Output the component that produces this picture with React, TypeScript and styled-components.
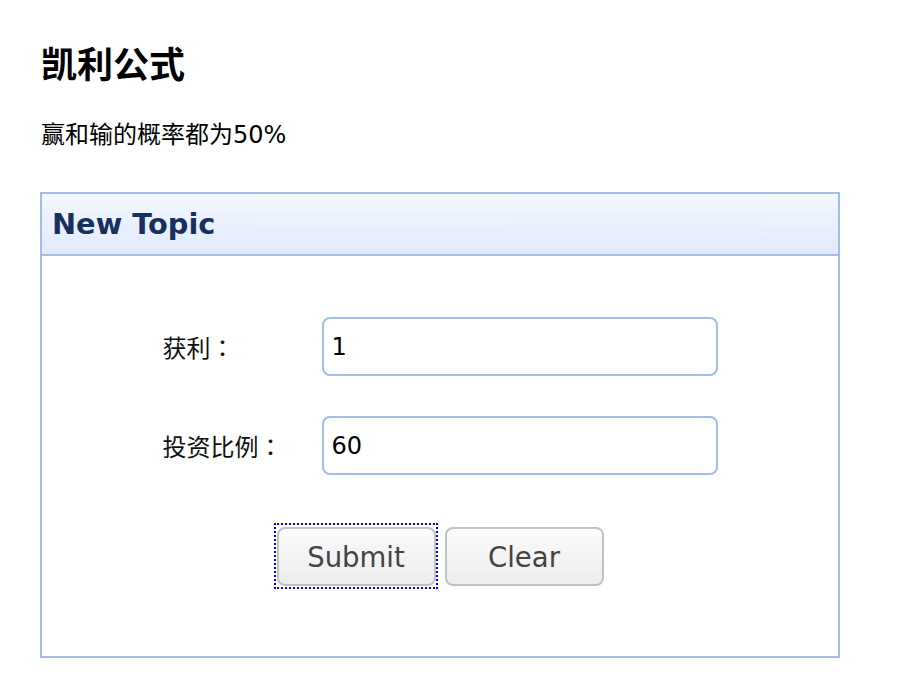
import React from "react";
import styled, { createGlobalStyle } from "styled-components";

const GlobalStyle = createGlobalStyle`
  html, body { margin: 0; padding: 0; background: #ffffff; }
  body { font-family: "DejaVu Sans", "Noto Sans CJK SC", sans-serif; color: #000; }
`;

const Page = styled.div`
  padding: 41px 0 0 41px;
  width: 800px;
`;

const Title = styled.h1`
  margin: 0;
  font-family: "Noto Sans CJK SC", sans-serif;
  font-weight: 700;
  font-size: 36px;
  line-height: 43px;
`;

const Subtitle = styled.p`
  margin: 37px 0 0 0;
  font-family: "DejaVu Sans", "Noto Sans CJK SC", sans-serif;
  font-size: 24px;
  line-height: 28px;
`;

const Panel = styled.section`
  margin: 43px 0 0 -1px;
  width: 800px;
  height: 466px;
  box-sizing: border-box;
  border: 2px solid #a2bde8;
  display: flex;
  flex-direction: column;
`;

const PanelHeader = styled.div`
  height: 62px;
  box-sizing: border-box;
  border-bottom: 2px solid #a2bde8;
  background: linear-gradient(to bottom, #f3f7fe, #e1eafb);
  display: flex;
  align-items: center;
  padding-left: 10px;
`;

const PanelTitle = styled.h2`
  margin: 0;
  font-family: "DejaVu Sans", sans-serif;
  font-weight: 700;
  font-size: 28.8px;
  color: #17305f;
`;

const PanelBody = styled.form`
  flex: 1;
  display: flex;
  flex-direction: column;
  align-items: center;
  padding-top: 61px;
`;

const FieldGrid = styled.div`
  display: grid;
  grid-template-columns: 159px 396px;
  row-gap: 40px;
  align-items: center;
`;

const Label = styled.label`
  font-family: "Noto Sans CJK SC", sans-serif;
  font-size: 24px;
  line-height: 30px;
  color: #111;
`;

const Colon = styled.span`
  font-family: "Noto Sans CJK TC", sans-serif;
`;

const Input = styled.input`
  width: 396px;
  height: 59px;
  box-sizing: border-box;
  border: 2px solid #a2bde8;
  border-radius: 8px;
  padding: 0 0 0 8px;
  font-family: "DejaVu Sans", sans-serif;
  font-size: 24px;
  color: #000;
  outline: none;
  background: #fff;
`;

const ButtonRow = styled.div`
  display: flex;
  gap: 9px;
  margin-top: 52px;
`;

const Button = styled.button<{ $focused?: boolean }>`
  position: relative;
  width: 159px;
  height: 59px;
  box-sizing: border-box;
  border: 2px solid #c2c2c2;
  border-radius: 8px;
  background: linear-gradient(to bottom, #fbfbfb, #ececec);
  font-family: "DejaVu Sans", sans-serif;
  font-size: 27.5px;
  color: #444;
  cursor: pointer;
  outline: none;

  &::after {
    content: "";
    display: ${(p) => (p.$focused ? "block" : "none")};
    position: absolute;
    left: -5px;
    top: -6px;
    right: -4px;
    bottom: -5px;
    border: 2px dotted #0000ff;
    pointer-events: none;
  }
`;

export default function App() {
  return (
    <>
      <GlobalStyle />
      <Page>
        <Title>凯利公式</Title>
        <Subtitle>赢和输的概率都为50%</Subtitle>
        <Panel>
          <PanelHeader>
            <PanelTitle>New Topic</PanelTitle>
          </PanelHeader>
          <PanelBody onSubmit={(e) => e.preventDefault()}>
            <FieldGrid>
              <Label htmlFor="profit">
                获利<Colon>：</Colon>
              </Label>
              <Input id="profit" defaultValue="1" />
              <Label htmlFor="ratio">
                投资比例<Colon>：</Colon>
              </Label>
              <Input id="ratio" defaultValue="60" />
            </FieldGrid>
            <ButtonRow>
              <Button type="submit" $focused>Submit</Button>
              <Button type="button">Clear</Button>
            </ButtonRow>
          </PanelBody>
        </Panel>
      </Page>
    </>
  );
}
